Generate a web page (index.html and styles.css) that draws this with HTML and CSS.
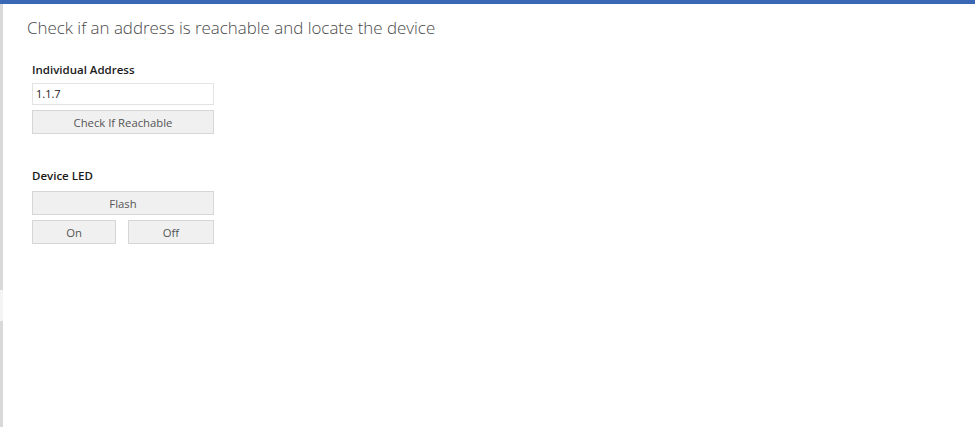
FILE: index.html
```html
<!DOCTYPE html>
<html>
<head>
<meta charset="utf-8">
<link rel="stylesheet" href="styles.css">
</head>
<body>
<div class="topbar"></div>
<div class="main">
  <div class="sidebar">
    <div class="rail rail-top"></div>
    <div class="rail-gap"></div>
    <div class="rail rail-bottom"></div>
  </div>
  <div class="content">
    <h1 class="title">Check if an address is reachable and locate the device</h1>
    <section class="group">
      <div class="label">Individual Address</div>
      <div class="input">1.1.7</div>
      <button class="btn">Check If Reachable</button>
    </section>
    <section class="group led">
      <div class="label">Device LED</div>
      <button class="btn flash">Flash</button>
      <div class="row">
        <button class="btn">On</button>
        <button class="btn">Off</button>
      </div>
    </section>
  </div>
</div>
</body>
</html>
```
FILE: styles.css
```css
* { box-sizing: border-box; }
html, body { margin: 0; padding: 0; background: #fff; }
body {
  width: 975px;
  height: 427px;
  overflow: hidden;
  font-family: "Open Sans", "Noto Sans", sans-serif;
  color: #222;
}
.topbar { height: 4px; background: #3a68b6; }
.main { display: flex; height: 423px; }
.sidebar { width: 3px; display: flex; flex-direction: column; }
.rail { background: #d9d9d9; }
.rail-top { height: 286px; }
.rail-gap { height: 31px; background: #f4f4f4; }
.rail-bottom { flex: 1; }
.content { padding: 12px 0 0 24px; }
.title {
  margin: 0;
  font-size: 16.9px;
  font-weight: 300;
  color: #4a4a4a;
  line-height: 24px;
}
.group { width: 182px; margin-left: 5px; margin-top: 22px; display: flex; flex-direction: column; }
.led { margin-top: 34px; }
.label { font-size: 11.5px; font-weight: 600; color: #1a1a1a; line-height: 16px; margin-bottom: 5px; }
.input {
  height: 22px;
  border: 1px solid #e3e3e3;
  font-size: 11px;
  line-height: 20px;
  padding-left: 3px;
  color: #222;
}
.btn {
  height: 24px;
  margin-top: 5px;
  border: 1px solid #d6d6d6;
  background: #f0f0f0;
  font-family: inherit;
  font-size: 11.3px;
  color: #555;
  padding: 0;
}
.btn.flash { margin-top: 2px; }
.row { display: grid; grid-template-columns: 84px 1fr; gap: 12px; }
```
